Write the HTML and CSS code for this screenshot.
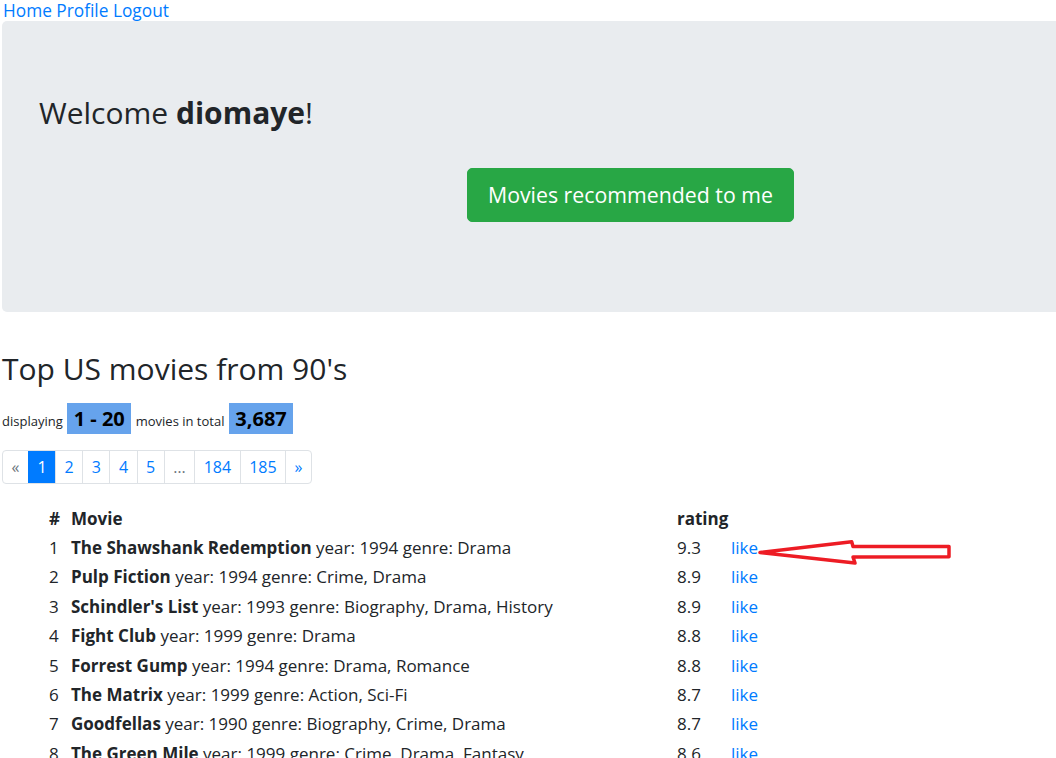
FILE: index.html
```html
<!DOCTYPE html>
<html lang="en">
<head>
<meta charset="utf-8">
<title>Movies</title>
<link rel="stylesheet" href="styles.css">
</head>
<body>
<div class="page">
  <nav class="topnav"><a href="#">Home</a> <a href="#">Profile</a> <a href="#">Logout</a></nav>
  <section class="jumbotron">
    <h1 class="welcome">Welcome <b>diomaye</b>!</h1>
    <div class="btn-row"><a class="btn-green" href="#">Movies recommended to me</a></div>
  </section>

  <h2 class="title">Top US movies from 90's</h2>
  <div class="count"><small>displaying</small> <span class="badge">1 - 20</span> <small>movies in total</small> <span class="badge">3,687</span></div>

  <ul class="pagination">
    <li class="pg muted">&laquo;</li>
    <li class="pg active">1</li>
    <li class="pg">2</li>
    <li class="pg">3</li>
    <li class="pg">4</li>
    <li class="pg">5</li>
    <li class="pg muted">&hellip;</li>
    <li class="pg">184</li>
    <li class="pg">185</li>
    <li class="pg">&raquo;</li>
  </ul>

  <table class="movies">
    <colgroup><col class="c-num"><col class="c-movie"><col class="c-rating"><col class="c-like"></colgroup>
    <thead>
      <tr><th>#</th><th>Movie</th><th>rating</th><th></th></tr>
    </thead>
    <tbody>
      <tr><td>1</td><td><b>The Shawshank Redemption</b> year: 1994 genre: Drama</td><td>9.3</td><td><a href="#">like</a></td></tr>
      <tr><td>2</td><td><b>Pulp Fiction</b> year: 1994 genre: Crime, Drama</td><td>8.9</td><td><a href="#">like</a></td></tr>
      <tr><td>3</td><td><b>Schindler's List</b> year: 1993 genre: Biography, Drama, History</td><td>8.9</td><td><a href="#">like</a></td></tr>
      <tr><td>4</td><td><b>Fight Club</b> year: 1999 genre: Drama</td><td>8.8</td><td><a href="#">like</a></td></tr>
      <tr><td>5</td><td><b>Forrest Gump</b> year: 1994 genre: Drama, Romance</td><td>8.8</td><td><a href="#">like</a></td></tr>
      <tr><td>6</td><td><b>The Matrix</b> year: 1999 genre: Action, Sci-Fi</td><td>8.7</td><td><a href="#">like</a></td></tr>
      <tr><td>7</td><td><b>Goodfellas</b> year: 1990 genre: Biography, Crime, Drama</td><td>8.7</td><td><a href="#">like</a></td></tr>
      <tr><td>8</td><td><b>The Green Mile</b> year: 1999 genre: Crime, Drama, Fantasy</td><td>8.6</td><td><a href="#">like</a></td></tr>
    </tbody>
  </table>

  <svg class="arrow" width="200" height="35" viewBox="0 0 200 35" aria-hidden="true">
    <polygon points="5,17.5 96.7,6.7 98,11.5 194,11.5 194,21.7 98,22 100,28" fill="none" stroke="#ed1c24" stroke-width="3.5" stroke-linejoin="round"/>
  </svg>
</div>
</body>
</html>
```

FILE: styles.css
```css
html, body {
  margin: 0;
  padding: 0;
  overflow: hidden;
  background: #fff;
}

body {
  font-family: "Open Sans", "Noto Sans", sans-serif;
  font-size: 17px;
  color: #212529;
}

a {
  color: #007bff;
  text-decoration: none;
}

.page {
  position: relative;
  padding: 0 2px;
}

.topnav {
  height: 21px;
  line-height: 21px;
  padding-left: 1px;
  font-size: 17.3px;
}

.jumbotron {
  box-sizing: border-box;
  width: calc(100% + 120px);
  height: 291px;
  background: #e9ecef;
  border-radius: 5px;
  padding: 74px 37px 0;
}

.welcome {
  margin: 0;
  font-size: 30px;
  line-height: 36px;
  font-weight: 400;
}

.welcome b {
  font-weight: 700;
}

.btn-row {
  margin-top: 37px;
  padding-left: 428px;
}

.btn-green {
  display: inline-block;
  background: #28a745;
  border: 1px solid #28a745;
  border-radius: 5px;
  color: #fff;
  font-size: 21.3px;
  line-height: 32px;
  padding: 10px 20px;
}

.title {
  margin: 39px 0 0;
  font-size: 30px;
  line-height: 36px;
  font-weight: 400;
}

.count {
  margin-top: 16px;
  line-height: 31px;
}

.count small {
  font-size: 13px;
}

.badge {
  display: inline-block;
  background: #66a3ec;
  color: #000;
  font-weight: 700;
  font-size: 20px;
  line-height: 31px;
  padding: 0 6.5px;
}

.pagination {
  display: flex;
  list-style: none;
  margin: 13px 0 0;
  padding: 0;
  width: max-content;
  border: 1px solid #dee2e6;
  border-radius: 4px;
  overflow: hidden;
  font-size: 16px;
}

.pg {
  padding: 4px 8.5px;
  line-height: 24px;
  color: #007bff;
  border-left: 1px solid #dee2e6;
}

.pg:first-child {
  border-left: 0;
}

.pg.muted {
  color: #6c757d;
}

.pg.active {
  background: #007bff;
  color: #fff;
  border-left-color: #007bff;
}

.movies {
  margin: 20px 0 0 43px;
  border-collapse: collapse;
  table-layout: fixed;
  width: 782px;
}

.c-num { width: 22px; }
.c-movie { width: 606px; }
.c-rating { width: 54px; }
.c-like { width: 100px; }

.movies th,
.movies td {
  padding: 0 4px;
  height: 29.4px;
  line-height: 24px;
  text-align: left;
  white-space: nowrap;
}

.movies th {
  font-weight: 700;
}

.arrow {
  position: absolute;
  left: 755px;
  top: 535px;
}
```
